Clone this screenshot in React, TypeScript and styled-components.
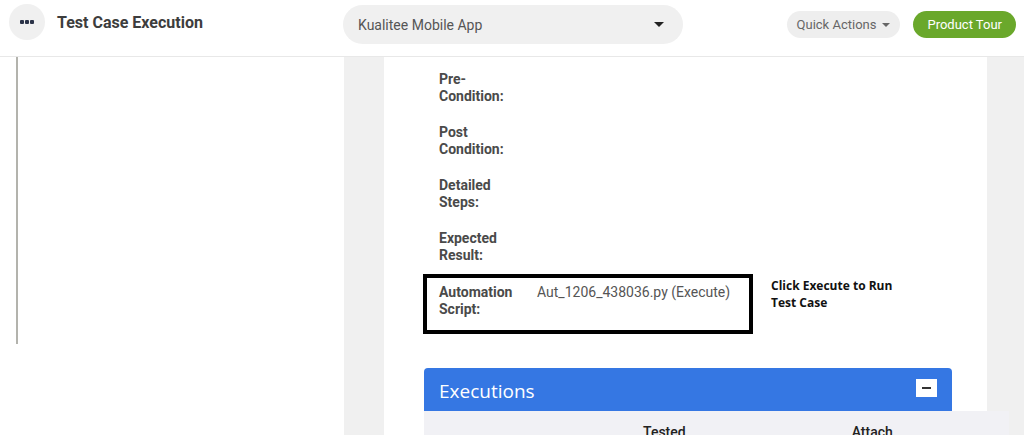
import styled, { createGlobalStyle } from "styled-components";

const GlobalStyle = createGlobalStyle`
  html, body {
    margin: 0;
    padding: 0;
    background: #ffffff;
    font-family: Roboto, "Liberation Sans", Arial, sans-serif;
    overflow: hidden;
  }
  * { box-sizing: border-box; }
`;

interface Field {
  label: string;
  value?: string;
}

const fields: Field[] = [
  { label: "Pre-Condition:" },
  { label: "Post Condition:" },
  { label: "Detailed Steps:" },
  { label: "Expected Result:" },
];

const Page = styled.div`
  width: 1024px;
  height: 435px;
  overflow: hidden;
  display: flex;
  flex-direction: column;
`;

const Header = styled.header`
  height: 57px;
  flex-shrink: 0;
  border-bottom: 1px solid #e8e8e8;
  display: flex;
  align-items: flex-start;
  padding: 4px 8px 0 9px;
`;

const MenuCircle = styled.div`
  width: 36px;
  height: 36px;
  border-radius: 50%;
  background: #f0f0f0;
  display: flex;
  align-items: center;
  justify-content: center;
  gap: 1.5px;
`;

const Dot = styled.span`
  width: 3.5px;
  height: 3.5px;
  background: #2b3348;
  border-radius: 1px;
`;

const Title = styled.h1`
  margin: 1px 0 0 12px;
  font-size: 16px;
  font-weight: 700;
  color: #3d3d3d;
  line-height: 36px;
  width: 286px;
`;

const Select = styled.div`
  width: 340px;
  height: 39px;
  margin-top: 1px;
  border-radius: 20px;
  background: #f0f0f0;
  display: flex;
  align-items: center;
  justify-content: space-between;
  padding: 0 19px 0 15px;
  font-size: 14px;
  color: #555;
`;

const Caret = styled.span<{ $size?: number; $color?: string }>`
  width: 0;
  height: 0;
  border-left: ${(p) => p.$size ?? 5}px solid transparent;
  border-right: ${(p) => p.$size ?? 5}px solid transparent;
  border-top: ${(p) => p.$size ?? 5}px solid ${(p) => p.$color ?? "#222"};
`;

const Actions = styled.div`
  margin-left: auto;
  display: flex;
  gap: 13px;
  margin-top: 7px;
`;

const PillButton = styled.button<{ $primary?: boolean }>`
  height: 27px;
  border: none;
  border-radius: 14px;
  font-family: inherit;
  font-size: 13px;
  padding: 0 ${(p) => (p.$primary ? "14px" : "10px")};
  display: flex;
  align-items: center;
  gap: 6px;
  background: ${(p) => (p.$primary ? "#6aa82b" : "#eeeeee")};
  color: ${(p) => (p.$primary ? "#ffffff" : "#666")};
`;

const Body = styled.div`
  flex: 1;
  display: flex;
  min-height: 0;
`;

const Sidebar = styled.aside`
  width: 344px;
  flex-shrink: 0;
  padding-left: 16px;
`;

const SideRule = styled.div`
  width: 2px;
  height: 287px;
  background: #b3b3ad;
`;

const Main = styled.main`
  flex: 1;
  background: #f0f0f0;
  padding-left: 40px;
`;

const Card = styled.section`
  width: 603px;
  height: 100%;
  background: #ffffff;
  padding: 14px 35px 0 40px;
`;

const FieldList = styled.div`
  display: flex;
  flex-direction: column;
  gap: 19px;
  padding-left: 15px;
`;

const FieldRow = styled.div`
  display: flex;
  font-size: 14px;
  line-height: 17px;
`;

const Label = styled.div`
  width: 84px;
  font-weight: 700;
  color: #4a4a4a;
  margin-right: 14px;
`;

const Value = styled.div`
  color: #555;
`;

const ScriptLine = styled.div`
  display: flex;
  align-items: flex-start;
  margin-top: 10px;
`;

const Highlight = styled.div`
  width: 330px;
  border: 4px solid #000;
  padding: 6px 12px 12px 12px;
  margin-left: -1px;
`;

const Note = styled.div`
  margin-left: 18px;
  margin-top: 3px;
  font-family: "Open Sans", "Liberation Sans", sans-serif;
  font-weight: 700;
  font-size: 12px;
  line-height: 17px;
  color: #111;
  width: 130px;
`;

const Panel = styled.div`
  margin-top: 34px;
  width: 528px;
  height: 43px;
  background: #3577e3;
  border-radius: 4px 4px 0 0;
  display: flex;
  align-items: center;
  justify-content: space-between;
  padding: 0 15px;
`;

const PanelTitle = styled.h2`
  margin: 0;
  font-family: "Open Sans", "Liberation Sans", sans-serif;
  font-weight: 400;
  font-size: 19px;
  color: #ffffff;
  padding-top: 2px;
`;

const Collapse = styled.button`
  width: 21px;
  height: 18px;
  border: none;
  background: #ffffff;
  padding: 0;
  display: flex;
  align-items: center;
  justify-content: center;
  margin-top: -4px;
`;

const Bar = styled.span`
  width: 9px;
  height: 2px;
  background: #333;
`;

const TableHead = styled.div`
  width: 585px;
  height: 30px;
  background: #f1f1f5;
  display: flex;
  padding-top: 13px;
  font-size: 14px;
  font-weight: 500;
  color: #222;
`;

const HeadCell = styled.div<{ $left: number }>`
  margin-left: ${(p) => p.$left}px;
`;

export default function App() {
  return (
    <Page>
      <GlobalStyle />
      <Header>
        <MenuCircle>
          <Dot />
          <Dot />
          <Dot />
        </MenuCircle>
        <Title>Test Case Execution</Title>
        <Select>
          <span>Kualitee Mobile App</span>
          <Caret $size={5} />
        </Select>
        <Actions>
          <PillButton>
            Quick Actions
            <Caret $size={4} $color="#666" />
          </PillButton>
          <PillButton $primary>Product Tour</PillButton>
        </Actions>
      </Header>
      <Body>
        <Sidebar>
          <SideRule />
        </Sidebar>
        <Main>
          <Card>
            <FieldList>
              {fields.map((f) => (
                <FieldRow key={f.label}>
                  <Label>{f.label}</Label>
                  {f.value && <Value>{f.value}</Value>}
                </FieldRow>
              ))}
            </FieldList>
            <ScriptLine>
              <Highlight>
                <FieldRow>
                  <Label>Automation Script:</Label>
                  <Value>Aut_1206_438036.py (Execute)</Value>
                </FieldRow>
              </Highlight>
              <Note>Click Execute to Run Test Case</Note>
            </ScriptLine>
            <Panel>
              <PanelTitle>Executions</PanelTitle>
              <Collapse>
                <Bar />
              </Collapse>
            </Panel>
            <TableHead>
              <HeadCell $left={219}>Tested</HeadCell>
              <HeadCell $left={166}>Attach</HeadCell>
            </TableHead>
          </Card>
        </Main>
      </Body>
    </Page>
  );
}
